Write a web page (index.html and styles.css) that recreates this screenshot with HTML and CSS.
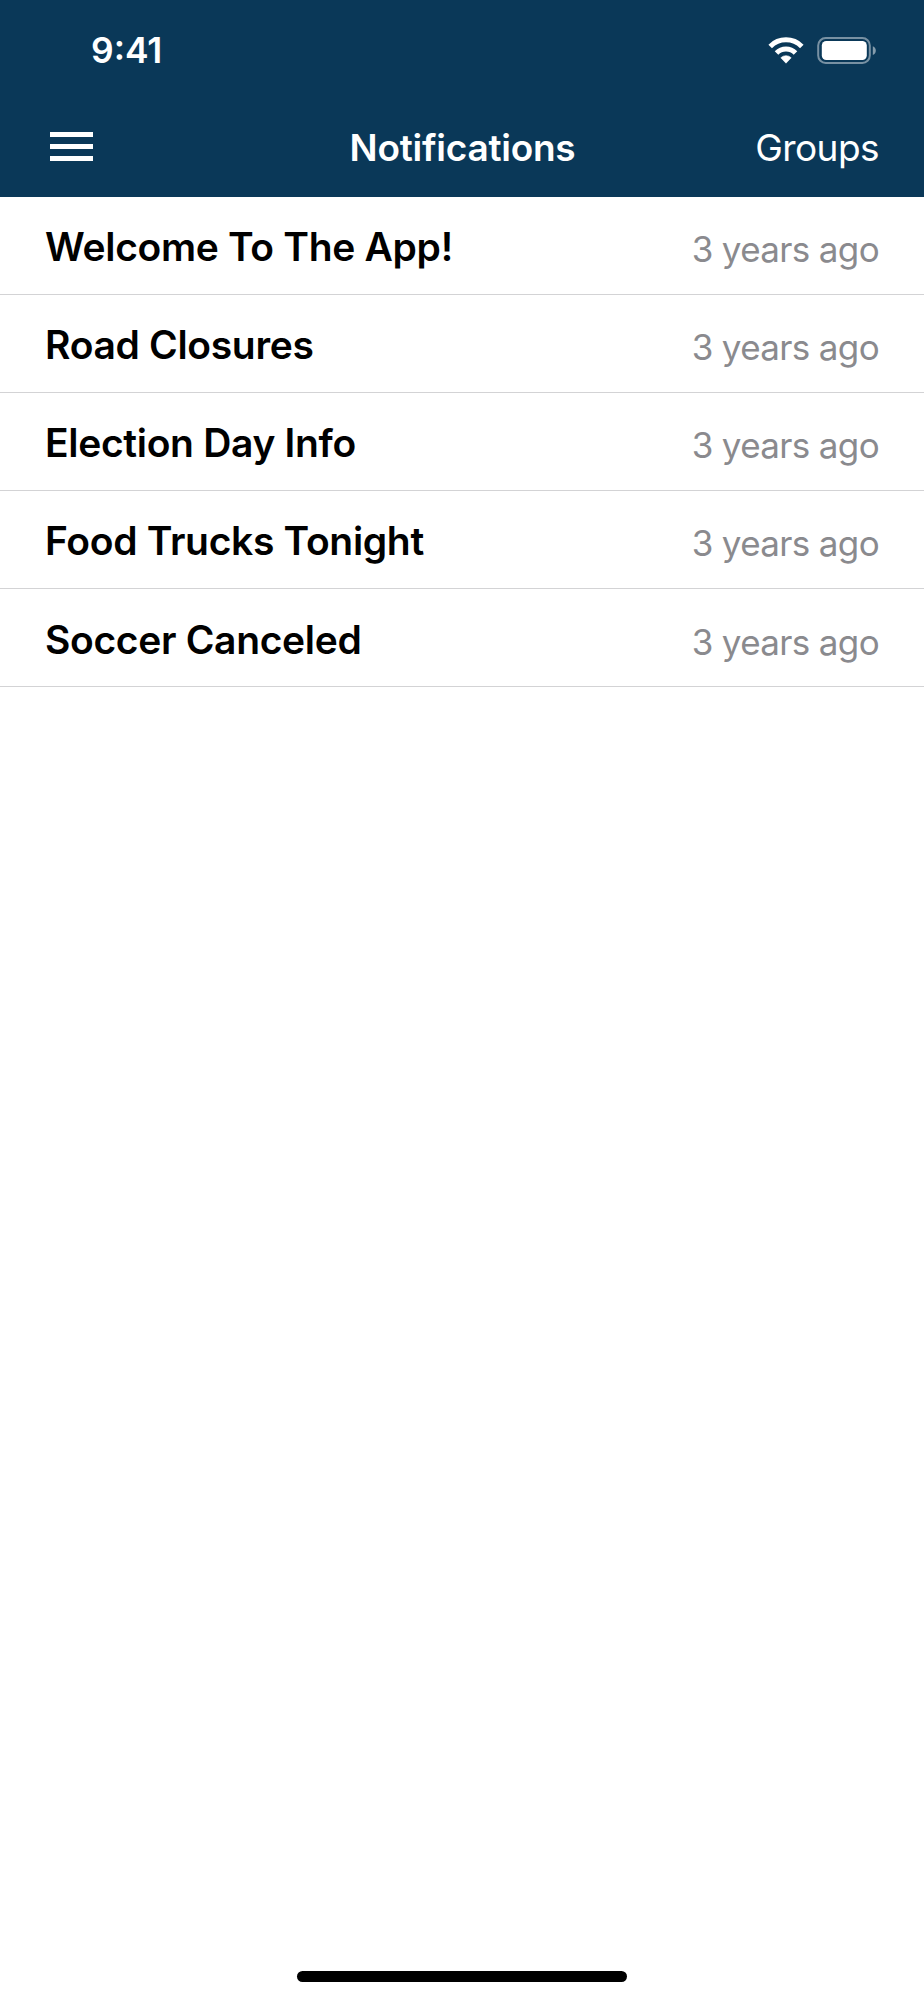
FILE: index.html
```html
<!doctype html>
<html lang="en">
    <head>
        <meta charset="utf-8">
        <meta name="viewport" content="width=device-width, initial-scale=1.0">
        <title>Notifications</title>
        <link rel="stylesheet" href="styles.css">
    </head>
    <body>
        <div class="screen">
            <header class="header">
                <div class="status-bar">
                    <span class="time">9:41</span>
                    <div class="status-icons">
                        <svg class="wifi" width="36" height="27" viewBox="0 0 36 27">
                            <path d="M2.2 9.4a22.3 22.3 0 0 1 31.6 0M8.5 15.9a13.4 13.4 0 0 1 19 0" fill="none" stroke="#fff" stroke-width="5" />
                            <path d="M12.8 20.8a7.4 7.4 0 0 1 10.4 0L18 26.2z" fill="#fff" stroke="#fff" stroke-width=".6" stroke-linejoin="round" />
                        </svg>
                        <svg class="battery" width="60" height="27" viewBox="0 0 60 27">
                            <rect x="1.2" y="1" width="51.6" height="25" rx="7.5" fill="none" stroke="#fff" stroke-opacity=".45" stroke-width="2" />
                            <rect x="4.8" y="4" width="45" height="19" rx="4.5" fill="#fff" />
                            <path d="M55.8 9.2c4 1.5 4 7.2 0 8.7z" fill="#fff" fill-opacity=".5" />
                        </svg>
                    </div>
                </div>
                <nav class="nav">
                    <button class="menu-btn" aria-label="Menu">
                        <span></span>
                        <span></span>
                        <span></span>
                    </button>
                    <h1>Notifications</h1>
                    <a class="groups" href="#">Groups</a>
                </nav>
            </header>

            <ul class="list">
                <li class="row"><span class="subject">Welcome To The App!</span><span class="date">3 years ago</span></li>
                <li class="row"><span class="subject">Road Closures</span><span class="date">3 years ago</span></li>
                <li class="row"><span class="subject">Election Day Info</span><span class="date">3 years ago</span></li>
                <li class="row"><span class="subject">Food Trucks Tonight</span><span class="date">3 years ago</span></li>
                <li class="row"><span class="subject">Soccer Canceled</span><span class="date">3 years ago</span></li>
            </ul>

            <div class="home-indicator"></div>
        </div>
    </body>
</html>
```
FILE: styles.css
```css
body {
    margin: 0;
    background-color: #fff;
    color: #000;
    font-family: Inter, "Liberation Sans", sans-serif;
}

.screen {
    display: flex;
    flex-direction: column;
    height: 2000px;
}

.header {
    height: 196.8px;
    background-color: #0a3858;
    color: #fff;
}

.status-bar {
    display: flex;
    justify-content: space-between;
    align-items: center;
    height: 101px;
    padding: 0 47px 0 91px;
}

.time {
    font-size: 35.4px;
    font-weight: 600;
    line-height: 42px;
}

.status-icons {
    display: flex;
    gap: 13px;
}

.nav {
    display: grid;
    grid-template-columns: 1fr auto 1fr;
    align-items: center;
    height: 93px;
    padding: 0 45px 0 50px;
}

.menu-btn {
    display: flex;
    flex-direction: column;
    gap: 7px;
    width: 43px;
    margin-bottom: 3px;
    padding: 0;
    border: none;
    background: none;
}

.menu-btn span {
    height: 5px;
    background-color: #fff;
}

.nav h1 {
    margin: 0 4px 0 0;
    font-size: 37px;
    font-weight: 600;
    line-height: 44px;
    letter-spacing: -0.25px;
}

.groups {
    justify-self: end;
    color: #fff;
    font-size: 37px;
    line-height: 44px;
    letter-spacing: -0.55px;
    text-decoration: none;
}

.list {
    margin: 0;
    padding: 0;
    list-style: none;
}

.row {
    display: flex;
    justify-content: space-between;
    align-items: center;
    box-sizing: border-box;
    height: 98.1px;
    padding: 2.6px 45px 0;
    border-bottom: 1px solid #d3d3d5;
}

.subject {
    font-size: 39px;
    font-weight: 600;
    letter-spacing: -0.32px;
}

.date {
    padding-top: 5px;
    color: #8a8a8e;
    font-size: 35px;
    letter-spacing: -0.65px;
}

.home-indicator {
    width: 330px;
    height: 11px;
    margin: auto auto 18px;
    border-radius: 6px;
    background-color: #000;
}
```
